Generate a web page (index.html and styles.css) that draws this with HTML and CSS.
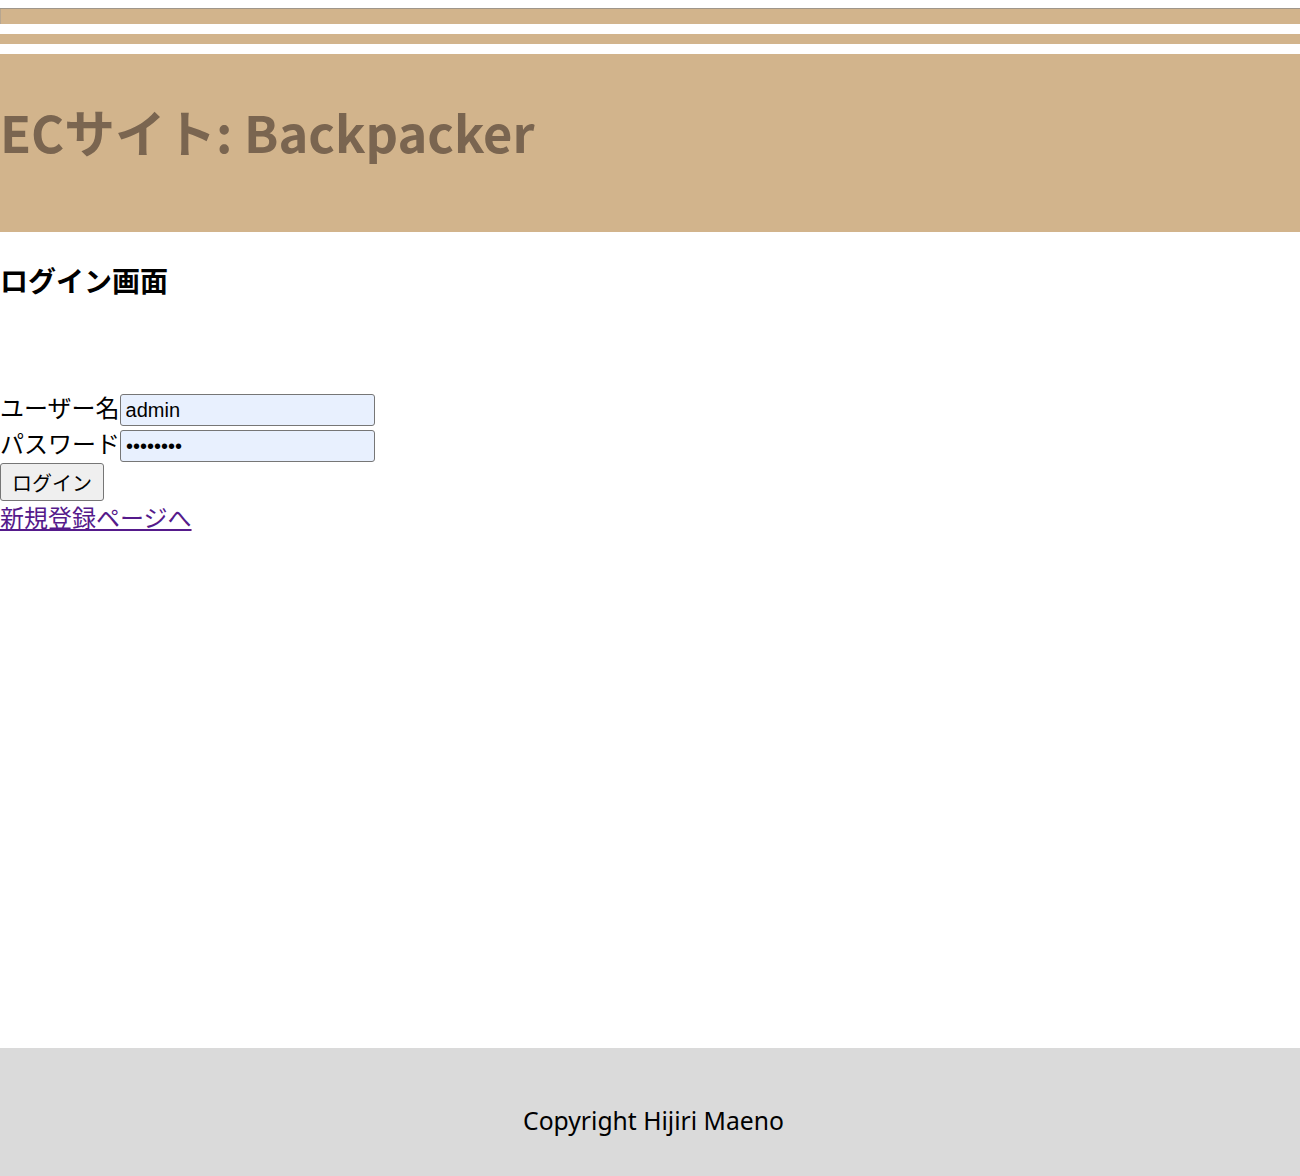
FILE: index.html
```html
<!DOCTYPE html>
<html lang="ja">
<head>
<meta charset="utf-8">
<title>ECサイト: Backpacker</title>
<link rel="stylesheet" href="styles.css">
</head>
<body>
<div class="page">
  <div class="stripes">
    <div class="stripe stripe-a"></div>
    <div class="gap"></div>
    <div class="stripe stripe-b"></div>
    <div class="gap"></div>
  </div>
  <header class="site-header">
    <h1 class="site-title">ECサイト: Backpacker</h1>
  </header>
  <main class="main">
    <h2 class="page-title">ログイン画面</h2>
    <form class="login-form">
      <div class="row"><label class="label">ユーザー名</label><input class="field" type="text" value="admin"></div>
      <div class="row"><label class="label">パスワード</label><input class="field" type="password" value="password"></div>
      <div class="row row-btn"><button class="btn" type="button">ログイン</button></div>
      <div class="row row-link"><a class="link" href="#">新規登録ページへ</a></div>
    </form>
  </main>
  <footer class="site-footer">
    <p class="copy">Copyright Hijiri Maeno</p>
  </footer>
</div>
</body>
</html>
```
FILE: styles.css
```css
html, body {
  margin: 0;
  padding: 0;
  background: #ffffff;
}
.page {
  min-height: 1176px;
  display: flex;
  flex-direction: column;
  font-family: "Noto Sans CJK JP", "Noto Sans", sans-serif;
  color: #000;
}
.stripes {
  margin-top: 8px;
  border-top: 1px solid #9f968a;
}
.stripe { background: #d2b48c; }
.stripe-a { height: 15px; border-left: 1px solid #b7a690; }
.stripe-b { height: 10px; }
.gap { height: 10px; background: #fff; }
.site-header {
  background: #d2b48c;
  height: 178px;
  display: flex;
  align-items: center;
}
.site-title {
  margin: 0;
  padding-bottom: 23px;
  font-size: 50.6px;
  font-weight: 700;
  color: #7a6550;
  line-height: 1.2;
}
.main {
  flex: 1;
}
.page-title {
  margin: 30px 0 0 0;
  font-size: 28px;
  font-weight: 700;
  line-height: 36px;
}
.login-form {
  margin-top: 94px;
  display: flex;
  flex-direction: column;
}
.row {
  display: flex;
  align-items: center;
  font-size: 24px;
  line-height: 36px;
}
.label {
  font-size: 24px;
  padding-bottom: 7px;
  line-height: 29px;
}
.field {
  box-sizing: border-box;
  width: 255px;
  height: 32px;
  margin: 2px 0;
  padding: 0 5px;
  border: 1px solid #767676;
  border-radius: 3px;
  background: #e8f0fe;
  font-family: "Liberation Sans", Arial, sans-serif;
  font-size: 20px;
  color: #000;
}
.row-btn {
  margin-top: -1px;
}
.row-link {
  margin-top: -2px;
}
.btn {
  box-sizing: border-box;
  width: 104px;
  height: 38px;
  padding: 0;
  border: 1px solid #767676;
  border-radius: 3px;
  background: #efefef;
  font-family: "Noto Sans CJK JP", sans-serif;
  font-size: 20px;
  color: #000;
}
.link {
  color: #551a8b;
  text-decoration: underline;
  font-size: 24px;
}
.site-footer {
  background: #dadada;
  height: 128px;
  display: flex;
  align-items: center;
  justify-content: center;
  padding-left: 7px;
}
.copy {
  margin: 16px 0 0;
  font-family: "Noto Sans", sans-serif;
  font-size: 24.7px;
}
```
